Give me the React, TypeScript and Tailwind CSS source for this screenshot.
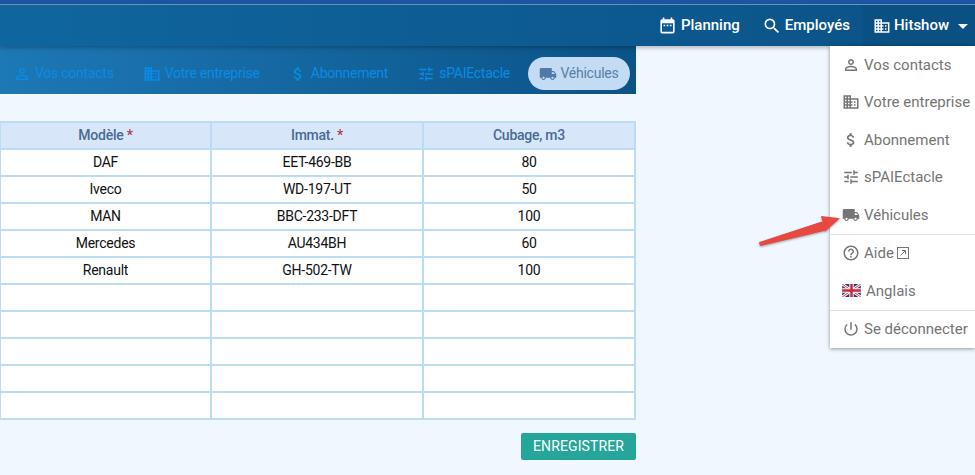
import { MdPersonOutline, MdBusiness, MdAttachMoney, MdTune, MdLocalShipping, MdHelpOutline, MdPowerSettingsNew, MdDateRange, MdSearch, MdArrowDropDown } from "react-icons/md"

const tabs = [
  { label: "Vos contacts", icon: MdPersonOutline },
  { label: "Votre entreprise", icon: MdBusiness },
  { label: "Abonnement", icon: MdAttachMoney },
  { label: "sPAIEctacle", icon: MdTune },
]

const vehicles = [
  ["DAF", "EET-469-BB", "80"],
  ["Iveco", "WD-197-UT", "50"],
  ["MAN", "BBC-233-DFT", "100"],
  ["Mercedes", "AU434BH", "60"],
  ["Renault", "GH-502-TW", "100"],
  ["", "", ""],
  ["", "", ""],
  ["", "", ""],
  ["", "", ""],
  ["", "", ""],
]

function UkFlag() {
  return (
    <svg width="19" height="13" viewBox="0 0 60 42" className="shrink-0">
      <rect width="60" height="42" fill="#2b3a7a" />
      <path d="M0 0L60 42M60 0L0 42" stroke="#fff" strokeWidth="9" />
      <path d="M0 0L60 42M60 0L0 42" stroke="#c8283c" strokeWidth="3" />
      <path d="M30 0V42M0 21H60" stroke="#fff" strokeWidth="14" />
      <path d="M30 0V42M0 21H60" stroke="#c8283c" strokeWidth="8" />
    </svg>
  )
}

function MenuItem({ icon, label, extra, labelClass }: { icon: React.ReactNode; label: string; extra?: React.ReactNode; labelClass?: string }) {
  return (
    <div className="h-[37.5px] flex items-center pl-[12px] text-[15px] text-[#757575]">
      <span className="w-[22px] flex items-center shrink-0">{icon}</span>
      <span className={`whitespace-nowrap ${labelClass ?? ""}`}>{label}</span>
      {extra}
    </div>
  )
}

export default function App() {
  return (
    <div className="relative w-[975px] h-[475px] overflow-hidden bg-[#f0f7ff] font-['Roboto',sans-serif]">
      <div className="h-[4px] bg-[#1c55a0]" />
      <div className="h-[1px] bg-[#6d97c4]" />
      <nav className="h-[41px] flex justify-end bg-gradient-to-r from-[#0f669e] to-[#0b5287] shadow-[0_2px_4px_rgba(0,0,0,0.25)] relative z-10 text-white text-[15px] font-medium">
        <div className="flex items-center gap-[4px] pr-[22px]">
          <MdDateRange size={19} />
          <span>Planning</span>
        </div>
        <div className="flex items-center gap-[3px] pr-[12px]">
          <MdSearch size={20} />
          <span>Employés</span>
        </div>
        <div className="w-[113px] flex items-center gap-[3px] pl-[11px] bg-[#0b5082]">
          <MdBusiness size={18} />
          <span>Hitshow</span>
          <MdArrowDropDown size={24} className="ml-[-1px]" />
        </div>
      </nav>

      <div className="w-[636px] h-[48px] pt-[7px] pl-[13px] flex items-center gap-[29px] bg-gradient-to-r from-[#1d78b6] to-[#0b5387] text-[14px] tracking-[-0.25px] text-[#0a8be6]">
        {tabs.map((t) => (
          <div key={t.label} className="flex items-center gap-[4px]">
            <t.icon size={18} className="shrink-0" />
            <span className="whitespace-nowrap">{t.label}</span>
          </div>
        ))}
        <div className="ml-[-11px] w-[102px] h-[33px] rounded-full bg-[#c3dbf3] flex items-center justify-center gap-[3px] text-[#5a7fa6]">
          <MdLocalShipping size={18} className="shrink-0 text-[#4f79a8]" />
          <span>Véhicules</span>
        </div>
      </div>

      <table className="mt-[27px] ml-[-1px] w-[637px] table-fixed border-collapse text-[14px] tracking-[-0.25px]">
        <thead>
          <tr className="h-[27px] bg-[#d7e7f9] text-[#4a6a94]">
            <th className="w-[211px] border-2 border-[#bcdcf3] font-medium">Modèle <span className="text-[#b03a4a]">*</span></th>
            <th className="w-[212px] border-2 border-[#bcdcf3] font-medium">Immat. <span className="text-[#b03a4a]">*</span></th>
            <th className="border-2 border-[#bcdcf3] font-medium">Cubage, m3</th>
          </tr>
        </thead>
        <tbody>
          {vehicles.map((row, i) => (
            <tr key={i} className="h-[27px] bg-white text-[#111111] text-center">
              {row.map((cell, j) => (
                <td key={j} className="border-2 border-[#bcdcf3] p-0">{cell}</td>
              ))}
            </tr>
          ))}
        </tbody>
      </table>

      <div className="w-[636px] flex justify-end mt-[13px]">
        <button className="w-[115px] h-[27px] rounded-[2px] bg-[#26a69a] text-white text-[14px] tracking-[0.1px]">ENREGISTRER</button>
      </div>

      {/* dropdown */}
      <div className="absolute left-[830px] top-[46px] w-[145px] h-[302px] bg-white shadow-[0_1px_4px_rgba(0,0,0,0.4)] z-20">
        <MenuItem icon={<MdPersonOutline size={18} />} label="Vos contacts" />
        <MenuItem icon={<MdBusiness size={18} />} label="Votre entreprise" />
        <MenuItem icon={<MdAttachMoney size={18} />} label="Abonnement" />
        <MenuItem icon={<MdTune size={18} />} label="sPAIEctacle" />
        <MenuItem icon={<MdLocalShipping size={18} />} label="Véhicules" />
        <div className="h-[1px] bg-[#e0e0e0]" />
        <MenuItem
          icon={<MdHelpOutline size={18} />}
          label="Aide"
          extra={
            <svg width="12" height="12" viewBox="0 0 12 12" className="ml-[3px]" fill="none" stroke="#757575" strokeWidth="1">
              <rect x="0.5" y="0.5" width="11" height="11" />
              <path d="M3.5 8.5L8.5 3.5M5 3.5H8.5V7" />
            </svg>
          }
        />
        <MenuItem icon={<UkFlag />} label="Anglais" labelClass="ml-[2px]" />
        <div className="h-[1px] bg-[#e0e0e0]" />
        <MenuItem icon={<MdPowerSettingsNew size={18} />} label="Se déconnecter" />
      </div>

      {/* red annotation arrow */}
      <svg className="absolute left-[750px] top-[205px] z-30 drop-shadow-[0_1px_1px_rgba(0,0,0,0.35)]" width="95" height="50" viewBox="0 0 95 50">
        <path d="M9.5 37.5L72 17L76 25L10.5 40.5Z" fill="#e8483f" strokeLinejoin="round" stroke="#e8483f" strokeWidth="1" />
        <path d="M71 11L90 13.3L75 26.7Z" fill="#e8483f" />
      </svg>
    </div>
  )
}
